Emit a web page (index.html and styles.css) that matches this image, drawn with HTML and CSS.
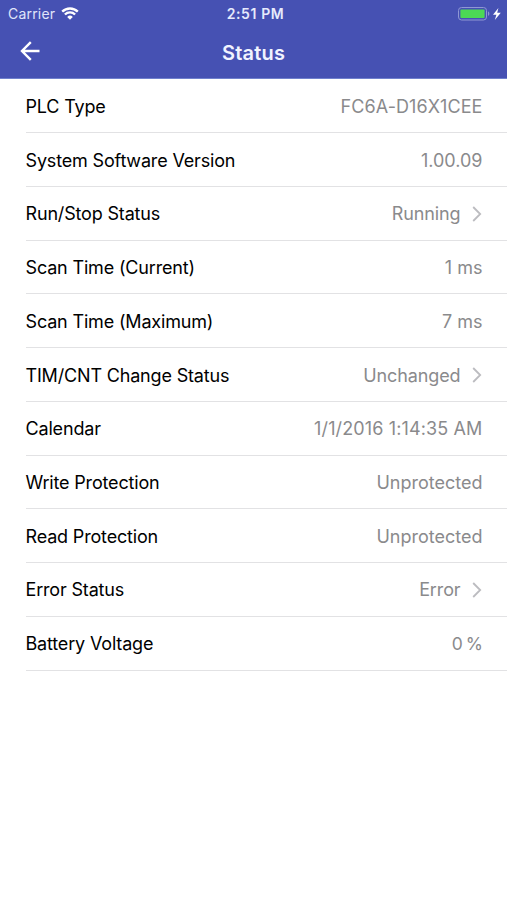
FILE: index.html
```html
<!DOCTYPE html>
<html lang="en">
<head>
<meta charset="utf-8">
<title>Status</title>
<link rel="stylesheet" href="styles.css">
</head>
<body>
<header class="header">
  <div class="statusbar">
    <div class="carrier">
      <span class="carrier-name">Carrier</span>
      <svg class="wifi" width="18" height="13" viewBox="0 0 18 13">
        <path d="M1.2 4.6a11.2 11.2 0 0 1 15.6 0" />
        <path d="M3.9 7.5a7.3 7.3 0 0 1 10.2 0" />
        <path class="wifi-dot" d="M9 12.8L6.2 9.9a4 4 0 0 1 5.6 0z" />
      </svg>
    </div>
    <div class="clock">2:51 PM</div>
    <div class="power">
      <svg width="44" height="14" viewBox="0 0 44 14">
        <rect class="battery-case" x="0.5" y="0.5" width="28" height="12.5" rx="3" />
        <rect class="battery-level" x="2.4" y="2.4" width="24.2" height="8.7" rx="1" />
        <path class="battery-cap" d="M30 4.6c1.8.5 1.8 3.9 0 4.4z" />
        <path class="bolt" d="M40.4 1L35 7.8h3.4L36.8 13l6-7.2h-3.6z" />
      </svg>
    </div>
  </div>
  <div class="navbar">
    <svg class="back" width="20" height="20" viewBox="0 0 20 20">
      <path d="M19.5 10H2.2M10.8 1.2L2 10l8.8 8.8" />
    </svg>
    <h1 class="title">Status</h1>
  </div>
</header>
<ul class="list">
  <li class="row"><span class="label">PLC Type</span><span class="value model">FC6A-D16X1CEE</span></li>
  <li class="row"><span class="label">System Software Version</span><span class="value">1.00.09</span></li>
  <li class="row"><span class="label">Run/Stop Status</span><span class="value state">Running</span><svg class="chevron" width="10" height="16" viewBox="0 0 10 16"><path d="M1.2 1l7 7-7 7" /></svg></li>
  <li class="row"><span class="label">Scan Time (Current)</span><span class="value">1 ms</span></li>
  <li class="row"><span class="label">Scan Time (Maximum)</span><span class="value">7 ms</span></li>
  <li class="row"><span class="label">TIM/CNT Change Status</span><span class="value state">Unchanged</span><svg class="chevron" width="10" height="16" viewBox="0 0 10 16"><path d="M1.2 1l7 7-7 7" /></svg></li>
  <li class="row"><span class="label">Calendar</span><span class="value date">1/1/2016 1:14:35 AM</span></li>
  <li class="row"><span class="label">Write Protection</span><span class="value">Unprotected</span></li>
  <li class="row"><span class="label">Read Protection</span><span class="value">Unprotected</span></li>
  <li class="row"><span class="label">Error Status</span><span class="value state">Error</span><svg class="chevron" width="10" height="16" viewBox="0 0 10 16"><path d="M1.2 1l7 7-7 7" /></svg></li>
  <li class="row"><span class="label">Battery Voltage</span><span class="value percent">0 %</span></li>
</ul>
</body>
</html>
```
FILE: styles.css
```css
body {
  margin: 0;
  font-family: Inter, "Liberation Sans", sans-serif;
  background-color: #fff;
  color: #000;
}

.header {
  box-sizing: border-box;
  height: 79px;
  border-bottom: 1px solid #6f80cd;
  background-color: #4651b3;
  color: #fff;
}

.statusbar {
  display: grid;
  grid-template-columns: 1fr auto 1fr;
  align-items: center;
  height: 27px;
  padding: 0 5px 0 8px;
  font-size: 14px;
}

.carrier {
  display: flex;
  align-items: center;
  gap: 6px;
  color: #e0e5fa;
}

.carrier-name {
  letter-spacing: 0.2px;
}

.clock {
  padding-left: 1px;
  color: #e6eafc;
  font-weight: 600;
  letter-spacing: 0.6px;
}

.wifi {
  fill: none;
  stroke: #fff;
  stroke-width: 2.4;
}

.wifi-dot {
  fill: #fff;
  stroke: none;
}

.power {
  display: flex;
  justify-content: flex-end;
}

.battery-case {
  fill: none;
  stroke: #8f97d4;
}

.battery-level {
  fill: #4cd955;
}

.battery-cap {
  fill: #8f97d4;
}

.bolt {
  fill: #fff;
}

.navbar {
  display: grid;
  grid-template-columns: 1fr auto 1fr;
  align-items: center;
  height: 52px;
  padding: 0 20px;
}

.back {
  margin-bottom: 4px;
  fill: none;
  stroke: #fff;
  stroke-width: 2.4;
}

.title {
  margin: 0;
  color: #f0f3ff;
  font-size: 20px;
  font-weight: 600;
  letter-spacing: 0.2px;
}

.list {
  margin: 0;
  padding: 0.6px 0 0 25.5px;
  list-style: none;
}

.row {
  display: flex;
  align-items: center;
  box-sizing: border-box;
  height: 53.72px;
  padding: 1px 24.5px 0 0;
  border-bottom: 1px solid #e2e2e4;
  font-size: 18px;
}

.label {
  flex: 1;
  letter-spacing: -0.17px;
}

.value {
  color: #8a8a8c;
}

.model {
  letter-spacing: 0.08px;
}

.state {
  letter-spacing: -0.12px;
}

.date {
  letter-spacing: 0.13px;
}

.percent {
  letter-spacing: -0.5px;
  word-spacing: -0.8px;
  font-size: 17.5px;
}

.chevron {
  margin-left: 11.5px;
  margin-right: 0.5px;
  fill: none;
  stroke: #bcbcc0;
  stroke-width: 1.8;
}
```
